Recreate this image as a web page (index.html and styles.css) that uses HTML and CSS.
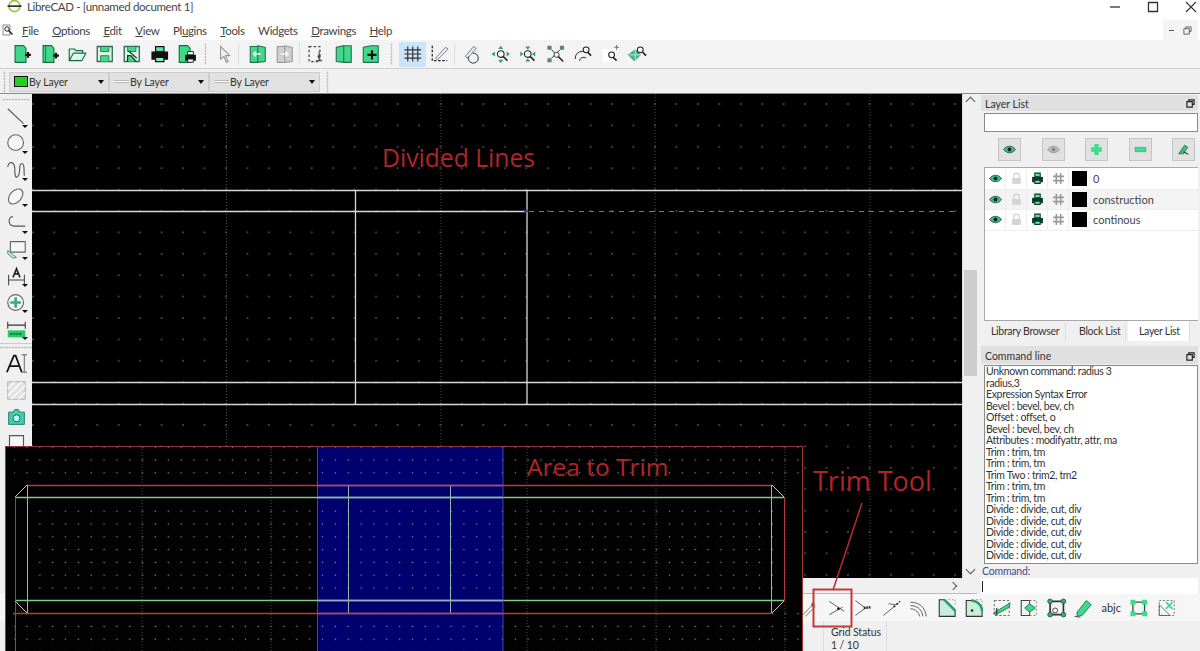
FILE: index.html
```html
<!DOCTYPE html>
<html lang="en">
<head>
<meta charset="utf-8">
<title>LibreCAD</title>
<link rel="stylesheet" href="styles.css">
</head>
<body>
<svg class="defs" width="0" height="0" aria-hidden="true">
  <defs>
    <symbol id="i-doc" viewBox="0 0 24 24"><path d="M4 2h10l3 3v17H4z" fill="#3fd98a" stroke="#1d6a48" stroke-width="1.4"/><path d="M16 13h7M19.500 9.500v7" stroke="#111" stroke-width="2.600"/></symbol>
    <symbol id="i-doc2" viewBox="0 0 24 24"><path d="M4 2h10l3 3v17H4z" fill="#3fd98a" stroke="#1d6a48" stroke-width="1.4"/><path d="M7 2v20" stroke="#1d6a48"/><path d="M16 14h7M19.500 10.500v7" stroke="#111" stroke-width="2.600"/></symbol>
    <symbol id="i-open" viewBox="0 0 24 24"><path d="M3 20V6h6l2 2h8v3H8L3 20h15l5-9h-5" fill="#d8f7e6" stroke="#1d6a48" stroke-width="1.400" stroke-linejoin="round"/></symbol>
    <symbol id="i-save" viewBox="0 0 24 24"><path d="M3 3h18v18H3z" fill="#dff6ea" stroke="#2c6a50" stroke-width="1.600"/><path d="M7 3h10v6H7zM7 21v-7h10v7" fill="#3fd98a" stroke="#2c6a50"/></symbol>
    <symbol id="i-saveas" viewBox="0 0 24 24"><path d="M3 3h18v18H3z" fill="#dff6ea" stroke="#2c6a50" stroke-width="1.600"/><path d="M7 3h10v6H7z" fill="#3fd98a" stroke="#2c6a50"/><path d="M7 21v-7h4l6 7M8 8l10 9" fill="#3fd98a" stroke="#1a3a2c" stroke-width="1.500"/></symbol>
    <symbol id="i-print" viewBox="0 0 24 24"><path d="M7 3h10v6H7z" fill="#5fe3a0" stroke="#111" stroke-width="1.500"/><path d="M2 9h20v10H2z" fill="#111"/><path d="M7 16h10v5H7z" fill="#8af0bb" stroke="#111" stroke-width="1.500"/></symbol>
    <symbol id="i-printl" viewBox="0 0 24 24"><path d="M7 2h10v7H7z" fill="#5fe3a0" stroke="#0d3a28" stroke-width="2"/><path d="M2 9h20v10H2z" fill="#0d3a28"/><path d="M7 15h10v6H7z" fill="#6fe8ab" stroke="#0d3a28" stroke-width="2"/></symbol>
    <symbol id="i-printdoc" viewBox="0 0 24 24"><path d="M3 2h10l3 3v17H3z" fill="#3fd98a" stroke="#1d6a48" stroke-width="1.400"/><path d="M10 13h13v7H10z" fill="#111"/><path d="M13 9h7v4h-7zM13 18h7v4h-7z" fill="#dff6ea" stroke="#111"/></symbol>
    <symbol id="i-cursor" viewBox="0 0 24 24"><path d="M7 3l11 11h-5l3 7-2 1-3-7-4 3z" fill="#f3f3f3" stroke="#9a9a9a" stroke-width="1.400"/></symbol>
    <symbol id="i-pgl" viewBox="0 0 24 24"><path d="M3 3h9v19H3zM12 2l9 2v17l-9 1z" fill="#3fd98a" stroke="#2c6a50" stroke-width="1.300"/><path d="M16 12H7M10 9l-3 3 3 3" fill="none" stroke="#f4f4f4" stroke-width="2"/></symbol>
    <symbol id="i-pgr" viewBox="0 0 24 24"><path d="M3 3h9v19H3zM12 2l9 2v17l-9 1z" fill="#cfcfcf" stroke="#999" stroke-width="1.300"/><path d="M7 12h9M13 9l3 3-3 3" fill="none" stroke="#f4f4f4" stroke-width="2"/></symbol>
    <symbol id="i-sel" viewBox="0 0 24 24"><path d="M4 3h13v18H4z" fill="none" stroke="#444" stroke-width="1.500" stroke-dasharray="3 2.500"/><circle cx="16" cy="15" r="1.800" fill="#444"/><path d="M16 9v11M12 20h8" stroke="#444" stroke-width="1.300"/></symbol>
    <symbol id="i-pg2" viewBox="0 0 24 24"><path d="M3 4l9-2v20l-9-1zM12 2h9v20h-9z" fill="#3fd98a" stroke="#2c6a50" stroke-width="1.300"/></symbol>
    <symbol id="i-pgp" viewBox="0 0 24 24"><path d="M3 4l9-2h9v20H3z" fill="#3fd98a" stroke="#2c6a50" stroke-width="1.300"/><path d="M8 13h11M13.500 7.500v11" stroke="#111" stroke-width="2.600"/></symbol>
    <symbol id="i-grid" viewBox="0 0 24 24"><path d="M6 3v18M12 3v18M18 3v18M2 7h20M2 12h20M2 17h20" stroke="#333" stroke-width="1.400"/></symbol>
    <symbol id="i-ortho" viewBox="0 0 24 24"><path d="M3 2v18h18" fill="none" stroke="#222" stroke-width="1.500" stroke-dasharray="3 2"/><path d="M7 17L19 4l3 2L9 19z" fill="#eef" stroke="#667" stroke-width="1"/></symbol>
    <symbol id="i-redraw" viewBox="0 0 24 24"><path d="M3 15L13 3l3 2L6 17z" fill="#e8f0ec" stroke="#667" stroke-width="1"/><path d="M12 11a6 6 0 1 1-5 4" fill="none" stroke="#333" stroke-width="1.200"/></symbol>
    <symbol id="i-zin" viewBox="0 0 24 24"><path d="M12 2l3 4H9zM12 23l3-4H9zM1 12l4-3v6zM23 12l-4-3v6z" fill="#3e9a73"/><circle cx="12" cy="12" r="4" fill="#fff" stroke="#222" stroke-width="1.300"/><path d="M15 15l5 5" stroke="#222" stroke-width="2"/></symbol>
    <symbol id="i-zout" viewBox="0 0 24 24"><path d="M12 7l3-4H9zM12 17l3 4H9zM7 12L3 9v6zM17 12l4-3v6z" fill="#3e9a73"/><circle cx="12" cy="12" r="4" fill="#fff" stroke="#222" stroke-width="1.300"/><path d="M15 15l5 5" stroke="#222" stroke-width="2"/></symbol>
    <symbol id="i-zauto" viewBox="0 0 24 24"><path d="M2 2h5v5H2zM17 2h5v5h-5zM2 17h5v5H2z" fill="#4d8a70"/><path d="M7 7l10 10M17 7L7 17" stroke="#333" stroke-width="1.200"/><circle cx="13" cy="13" r="3" fill="#fff" stroke="#222"/><path d="M15 15l6 6" stroke="#222" stroke-width="2"/></symbol>
    <symbol id="i-zprev" viewBox="0 0 24 24"><path d="M3 18a8 8 0 0 1 9-9M8 20a5 5 0 0 1 8-3" fill="none" stroke="#333" stroke-width="1.200"/><circle cx="16" cy="7" r="3.500" fill="#fff" stroke="#222" stroke-width="1.300"/><path d="M18 10l4 4" stroke="#222" stroke-width="2"/></symbol>
    <symbol id="i-zwin" viewBox="0 0 24 24"><path d="M2 6h16v16H2z" fill="#fff"/><circle cx="13" cy="13" r="3.500" fill="#fff" stroke="#222" stroke-width="1.300"/><path d="M15 16l4 4" stroke="#222" stroke-width="2"/><path d="M19 1v6M16 4h6" stroke="#666"/></symbol>
    <symbol id="i-zpan" viewBox="0 0 24 24"><path d="M9 6l4 4 3 3-4 4-4 4-4-4-4-4 4-3z" fill="#3eb88a"/><path d="M2 13h14M9 6v15" stroke="#e8e8e8"/><circle cx="15" cy="7" r="3.500" fill="#fff" stroke="#222" stroke-width="1.300"/><path d="M18 10l4 4" stroke="#222" stroke-width="2"/></symbol>
    <symbol id="i-eye" viewBox="0 0 24 24"><path d="M1 12c6-8 16-8 22 0-6 8-16 8-22 0z" fill="#3fbf85" stroke="#1d5a40" stroke-width="1.600"/><circle cx="12" cy="12" r="3.500" fill="#123"/></symbol>
    <symbol id="i-eyeg" viewBox="0 0 24 24"><path d="M1 12c6-8 16-8 22 0-6 8-16 8-22 0z" fill="#bbb" stroke="#999" stroke-width="1.600"/><circle cx="12" cy="12" r="3.500" fill="#888"/></symbol>
    <symbol id="i-plus" viewBox="0 0 24 24"><path d="M8 2h8v6h6v8h-6v6H8v-6H2V8h6z" fill="#3fdc8e"/></symbol>
    <symbol id="i-minus" viewBox="0 0 24 24"><path d="M2 8h20v8H2z" fill="#3fdc8e" stroke="#2b9d68"/></symbol>
    <symbol id="i-edit" viewBox="0 0 24 24"><path d="M3 20L14 4l6 4-8 12z" fill="#3fbf85" stroke="#2c6a50" stroke-width="1.500"/><path d="M12 16l9 5" stroke="#333" stroke-width="2"/></symbol>
    <symbol id="i-lock" viewBox="0 0 24 24"><path d="M7 11V7a5 5 0 0 1 10 0v4" fill="none" stroke="#ccc" stroke-width="2"/><path d="M4 11h16v11H4z" fill="#d4d4d4"/></symbol>
    <symbol id="i-hash" viewBox="0 0 24 24"><path d="M8 2v20M16 2v20M2 8h20M2 16h20" stroke="#999" stroke-width="3"/></symbol>
    <symbol id="i-line" viewBox="0 0 24 24"><path d="M2 2l18 17" stroke="#555" stroke-width="1.200"/></symbol>
    <symbol id="i-pin" viewBox="0 0 24 24"><path d="M3 22L17 8M8 22L20 10" stroke="#777" stroke-width="1.200"/><circle cx="17" cy="8" r="2.200" fill="#665"/></symbol>
    <symbol id="i-circle" viewBox="0 0 24 24"><circle cx="11" cy="11" r="9" fill="#f6f6f6" stroke="#666" stroke-width="1.300"/></symbol>
    <symbol id="i-spline" viewBox="0 0 24 24"><path d="M2 8c1-8 8-6 8 2s1 12 4 8 0-14 4-14 2 8 3 14" fill="none" stroke="#555" stroke-width="1.300"/></symbol>
    <symbol id="i-ellipse" viewBox="0 0 24 24"><ellipse cx="11" cy="12" rx="6.500" ry="10" transform="rotate(42 11 12)" fill="#f6f6f6" stroke="#666" stroke-width="1.300"/></symbol>
    <symbol id="i-poly" viewBox="0 0 24 24"><path d="M8 4C2 5 2 14 9 15h13" fill="none" stroke="#555" stroke-width="1.300"/></symbol>
    <symbol id="i-block" viewBox="0 0 24 24"><path d="M5 3h17v12H5z" fill="#f6f6f6" stroke="#666" stroke-width="1.300"/><path d="M2 13l10 8-4 1-6-5z" fill="#bfe8d6" stroke="#4d8a70"/></symbol>
    <symbol id="i-dim" viewBox="0 0 24 24"><path d="M3 10v12M21 10v12M3 16h18" stroke="#444" stroke-width="1.200"/><path d="M8 13l4-10 4 10M10 9h4" fill="none" stroke="#222" stroke-width="1.800"/></symbol>
    <symbol id="i-mod" viewBox="0 0 24 24"><circle cx="11" cy="12" r="9" fill="#f6f6f6" stroke="#666" stroke-width="1.300"/><path d="M11 6v12M5 12h12" stroke="#3ea87c" stroke-width="3"/></symbol>
    <symbol id="i-meas" viewBox="0 0 24 24"><path d="M2 3v8M22 3v8M2 7h20" stroke="#333" stroke-width="1.200"/><path d="M2 13h20v8H2z" fill="#22cc66"/><path d="M5 17h14" stroke="#0a5a2c" stroke-dasharray="2 1.500" stroke-width="2"/></symbol>
    <symbol id="i-text" viewBox="0 0 24 24"><path d="M1 22L9 3h2l7 19M4 15h11" fill="none" stroke="#111" stroke-width="2"/><path d="M21 2v20M18 2h6M18 22h6" stroke="#888" stroke-width="1.500"/></symbol>
    <symbol id="i-hatch" viewBox="0 0 24 24"><path d="M2 2h20v20H2z" fill="#e2e2e2" stroke="#aaa"/><path d="M2 10l8-8M2 18L18 2M6 22L22 6M14 22l8-8" stroke="#fafafa" stroke-width="2"/></symbol>
    <symbol id="i-cam" viewBox="0 0 24 24"><path d="M3 7h5l2-3h4l2 3h5v14H3z" fill="#3fd0a0" stroke="#2c6a70"/><circle cx="12" cy="14" r="4" fill="#bff" stroke="#155"/></symbol>
    <symbol id="i-img" viewBox="0 0 24 24"><path d="M4 3h16v14H4z" fill="#f6f6f6" stroke="#555" stroke-width="1.300"/></symbol>
    <symbol id="i-trim" viewBox="0 0 24 24"><path d="M3 4l18 12M3 20l16-9" stroke="#555" stroke-width="1.100"/><circle cx="14" cy="13" r="1.700" fill="#222"/></symbol>
    <symbol id="i-trim2" viewBox="0 0 24 24"><path d="M2 3l12 9M2 21l12-9" stroke="#555" stroke-width="1.100"/><path d="M12 12l9-1" stroke="#222" stroke-width="3" stroke-dasharray="2 1"/></symbol>
    <symbol id="i-lengthen" viewBox="0 0 24 24"><path d="M2 21l12-10" stroke="#555" stroke-width="1.100"/><path d="M14 11l8-7" stroke="#333" stroke-width="2" stroke-dasharray="3 1.500"/><path d="M8 7l9 1" stroke="#555"/></symbol>
    <symbol id="i-offset" viewBox="0 0 24 24"><path d="M2 5c10 0 18 6 19 17M2 9c8 0 14 5 15 13M2 13c6 0 10 4 11 9" fill="none" stroke="#666" stroke-width="1.200"/></symbol>
    <symbol id="i-bevel" viewBox="0 0 24 24"><path d="M3 2h6l13 13v7H3z" fill="#3fd98a" fill-opacity=".25" stroke="#333" stroke-width="1.300"/><path d="M9 2l13 13" stroke="#2c9d6a" stroke-width="3"/><path d="M14 2h8v8" fill="none" stroke="#888" stroke-dasharray="2 2"/></symbol>
    <symbol id="i-round" viewBox="0 0 24 24"><path d="M3 3h6c7 0 13 6 13 13v6H3z" fill="#3fd98a" fill-opacity=".25" stroke="#333" stroke-width="1.300"/><path d="M9 3c7 0 13 6 13 13" fill="none" stroke="#2c9d6a" stroke-width="3"/><circle cx="10" cy="15" r="1.500" fill="#222"/><path d="M15 2h7v7" fill="none" stroke="#888" stroke-dasharray="2 2"/></symbol>
    <symbol id="i-scale" viewBox="0 0 24 24"><path d="M3 3h18v18H3z" fill="none" stroke="#555" stroke-dasharray="3 2"/><path d="M2 18L22 6l-1 5L5 20z" fill="#3fd98a" stroke="#1d6a48"/><path d="M6 12v8" stroke="#333" stroke-width="1.500"/></symbol>
    <symbol id="i-mirror" viewBox="0 0 24 24"><path d="M3 3h10v18H3z" fill="#f6f6f6" stroke="#444" stroke-width="1.300"/><path d="M13 3h8v18h-8z" fill="none" stroke="#777" stroke-dasharray="2.500 2"/><path d="M7 12l6-5 7 5-7 5z" fill="#3fd98a" stroke="#1d6a48"/></symbol>
    <symbol id="i-stretch" viewBox="0 0 24 24"><path d="M4 4h16v16H4z" fill="#f4f4f4" stroke="#333" stroke-width="2"/><g fill="#3fa87c" stroke="#1d5a40"><circle cx="4" cy="4" r="2.800"/><circle cx="20" cy="4" r="2.800"/><circle cx="4" cy="20" r="2.800"/><circle cx="20" cy="20" r="2.800"/></g><circle cx="10" cy="15" r="3" fill="none" stroke="#333"/></symbol>
    <symbol id="i-attr" viewBox="0 0 24 24"><path d="M4 17L15 3l6 5-11 13-6 1z" fill="#3fd98a" stroke="#1d6a48"/><path d="M1 22l7 1" stroke="#333"/></symbol>
    <symbol id="i-square" viewBox="0 0 24 24"><path d="M5 5h14v14H5z" fill="#f6f6f6" stroke="#2c5a48" stroke-width="1.600"/><g fill="#3fd98a"><path d="M2 2h6v6H2zM16 2h6v6h-6zM2 16h6v6H2zM16 16h6v6h-6z"/></g></symbol>
    <symbol id="i-explode" viewBox="0 0 24 24"><path d="M3 3h18v18H3z" fill="none" stroke="#666" stroke-dasharray="2.500 2"/><path d="M3 8l13 13H3z" fill="none" stroke="#555"/><path d="M11 5l8 8M19 5l-8 8" stroke="#3fd98a" stroke-width="2"/></symbol>
    <pattern id="dots-main" x="-9.800" y="-0.700" width="21.450" height="21.400" patternUnits="userSpaceOnUse"><circle cx="10.700" cy="10.700" r=".8" fill="#8c8c8c"/></pattern>
    <pattern id="dots-trim" x="15.600" y="7.600" width="12.850" height="12.800" patternUnits="userSpaceOnUse"><circle cx="6.400" cy="6.400" r=".75" fill="#8c8c8c"/></pattern>
  </defs>
</svg>

<div class="app">
  <header class="titlebar">
    <div class="title-left">
      <svg class="app-logo" viewBox="0 0 16 16"><circle cx="8" cy="7" r="6.300" fill="none" stroke="#9ac23c" stroke-width="1.800"/><path d="M0 7h16" stroke="#222" stroke-width="1.800"/></svg>
      <span>LibreCAD - [unnamed document 1]</span>
    </div>
    <div class="winbtns">
      <svg class="winbtn" viewBox="0 0 12 12"><path d="M1 6h10" stroke="#333" stroke-width="1.300"/></svg>
      <svg class="winbtn" viewBox="0 0 12 12"><path d="M1.500 1.500h9v9h-9z" fill="none" stroke="#333" stroke-width="1.300"/></svg>
      <svg class="winbtn" viewBox="0 0 12 12"><path d="M1 1l10 10M11 1L1 11" stroke="#333" stroke-width="1.100"/></svg>
    </div>
  </header>

  <nav class="menubar">
    <svg class="menu-icon" viewBox="0 0 12 12"><path d="M1 1h7v10H1z" fill="#fff" stroke="#888"/><circle cx="5" cy="5" r="2.200" fill="none" stroke="#222"/><path d="M6.500 6.500l4 4" stroke="#222" stroke-width="1.500"/></svg>
    <div class="menu-items">
      <span><u>F</u>ile</span><span><u>O</u>ptions</span><span><u>E</u>dit</span><span><u>V</u>iew</span><span>Pl<u>u</u>gins</span><span><u>T</u>ools</span><span>Widgets</span><span><u>D</u>rawings</span><span><u>H</u>elp</span>
    </div>
    <div class="mdi-btns">
      <span class="mdi-min"></span>
      <svg class="mdi-restore" viewBox="0 0 10 10"><path d="M3 3V1h6v5H7M1 3h6v6H1z" fill="none" stroke="#555"/></svg>
    </div>
  </nav>

  <div class="toolbar">
    <svg class="ti"><use href="#i-doc"/></svg>
    <svg class="ti"><use href="#i-doc2"/></svg>
    <svg class="ti"><use href="#i-open"/></svg>
    <svg class="ti"><use href="#i-save"/></svg>
    <svg class="ti"><use href="#i-saveas"/></svg>
    <svg class="ti"><use href="#i-print"/></svg>
    <svg class="ti"><use href="#i-printdoc"/></svg>
    <span class="handle h10"></span>
    <svg class="ti"><use href="#i-cursor"/></svg>
    <span class="sep s5"></span>
    <svg class="ti"><use href="#i-pgl"/></svg>
    <svg class="ti"><use href="#i-pgr"/></svg>
    <span class="sep s3"></span>
    <svg class="ti"><use href="#i-sel"/></svg>
    <svg class="ti"><use href="#i-pg2"/></svg>
    <svg class="ti"><use href="#i-pgp"/></svg>
    <span class="handle h14"></span>
    <span class="ti-active"><svg class="ti"><use href="#i-grid"/></svg></span>
    <svg class="ti"><use href="#i-ortho"/></svg>
    <span class="sep s5"></span>
    <svg class="ti"><use href="#i-redraw"/></svg>
    <svg class="ti"><use href="#i-zin"/></svg>
    <svg class="ti"><use href="#i-zout"/></svg>
    <svg class="ti"><use href="#i-zauto"/></svg>
    <svg class="ti"><use href="#i-zprev"/></svg>
    <svg class="ti"><use href="#i-zwin"/></svg>
    <svg class="ti"><use href="#i-zpan"/></svg>
  </div>

  <div class="propbar">
    <span class="handle h8"></span>
    <div class="combo combo-color"><span class="swatch-green"></span><span class="combo-label">By Layer</span><span class="caret"></span></div>
    <div class="combo"><span class="line-sample"></span><span class="combo-label">By Layer</span><span class="caret"></span></div>
    <div class="combo combo-wide"><span class="line-sample"></span><span class="combo-label">By Layer</span><span class="caret"></span></div>
    <span class="handle h8"></span>
  </div>

  <main class="main">
    <aside class="lefttools">
      <span class="handle-h"></span>
      <span class="li more"><svg><use href="#i-line"/></svg></span>
      <span class="li more"><svg><use href="#i-circle"/></svg></span>
      <span class="li more"><svg><use href="#i-spline"/></svg></span>
      <span class="li more"><svg><use href="#i-ellipse"/></svg></span>
      <span class="li more"><svg><use href="#i-poly"/></svg></span>
      <span class="li more"><svg><use href="#i-block"/></svg></span>
      <span class="li more"><svg><use href="#i-dim"/></svg></span>
      <span class="li more"><svg><use href="#i-mod"/></svg></span>
      <span class="li more"><svg><use href="#i-meas"/></svg></span>
      <span class="left-sep"></span>
      <span class="li"><svg><use href="#i-text"/></svg></span>
      <span class="li"><svg><use href="#i-hatch"/></svg></span>
      <span class="li"><svg><use href="#i-cam"/></svg></span>
      <span class="li"><svg><use href="#i-img"/></svg></span>
    </aside>

    <section class="center">
      <div class="canvas-row">
        <div class="canvas">
          <svg class="drawing" viewBox="0 0 930 484">
            <rect width="930" height="484" fill="url(#dots-main)"/>
            <path d="M194.500 0v484M409 0v484M623 0v484M838 0v484" stroke="#4a4a4a" stroke-dasharray="1 2"/>
            <path d="M0 96.500h930M0 288.500h930M0 310.500h930M0 117.500h495M323.500 96v215M495 96v215" stroke="#d8d8d8" stroke-width="1.300" fill="none"/>
            <path d="M497 117.500h428" stroke="#777" stroke-dasharray="5 5"/>
            <circle cx="494" cy="117" r="1.800" fill="#223a8c"/>
          </svg>
          <span class="note note-divided">Divided Lines</span>
        </div>
        <div class="vscroll"><span class="arrow-up"></span><span class="thumb"></span><span class="arrow-down"></span></div>
      </div>
      <div class="hscroll"><span class="arrow-right"></span></div>
    </section>

    <aside class="dock">
      <div class="dock-head"><span>Layer List</span><svg class="float" viewBox="0 0 10 10"><path d="M3 3V1h6v5H7M1 3h6v6H1z" fill="none" stroke="#222" stroke-width="1.300"/></svg></div>
      <div class="filter"></div>
      <div class="layer-btns">
        <span class="lbtn"><svg><use href="#i-eye"/></svg></span>
        <span class="lbtn"><svg><use href="#i-eyeg"/></svg></span>
        <span class="lbtn"><svg><use href="#i-plus"/></svg></span>
        <span class="lbtn"><svg><use href="#i-minus"/></svg></span>
        <span class="lbtn"><svg><use href="#i-edit"/></svg></span>
      </div>
      <div class="layers">
        <div class="layer">
          <span class="cell"><svg><use href="#i-eye"/></svg></span><span class="cell"><svg><use href="#i-lock"/></svg></span><span class="cell"><svg><use href="#i-printl"/></svg></span><span class="cell"><svg><use href="#i-hash"/></svg></span><span class="cell"><i class="black"></i></span><span class="lname">0</span>
        </div>
        <div class="layer layer-alt">
          <span class="cell"><svg><use href="#i-eye"/></svg></span><span class="cell"><svg><use href="#i-lock"/></svg></span><span class="cell"><svg><use href="#i-printl"/></svg></span><span class="cell"><svg><use href="#i-hash"/></svg></span><span class="cell"><i class="black"></i></span><span class="lname">construction</span>
        </div>
        <div class="layer">
          <span class="cell"><svg><use href="#i-eye"/></svg></span><span class="cell"><svg><use href="#i-lock"/></svg></span><span class="cell"><svg><use href="#i-printl"/></svg></span><span class="cell"><svg><use href="#i-hash"/></svg></span><span class="cell"><i class="black"></i></span><span class="lname">continous</span>
        </div>
      </div>
      <div class="tabs">
        <span class="tab">Library Browser</span><span class="tab">Block List</span><span class="tab tab-on">Layer List</span>
      </div>
      <div class="dock-head dock-head-2"><span>Command line</span><svg class="float" viewBox="0 0 10 10"><path d="M3 3V1h6v5H7M1 3h6v6H1z" fill="none" stroke="#222" stroke-width="1.300"/></svg></div>
      <div class="history">
        <div>Unknown command: radius 3</div><div>radius,3</div><div>Expression Syntax Error</div><div>Bevel : bevel, bev, ch</div><div>Offset : offset, o</div><div>Bevel : bevel, bev, ch</div><div>Attributes : modifyattr, attr, ma</div><div>Trim : trim, tm</div><div>Trim : trim, tm</div><div>Trim Two : trim2, tm2</div><div>Trim : trim, tm</div><div>Trim : trim, tm</div><div>Divide : divide, cut, div</div><div>Divide : divide, cut, div</div><div>Divide : divide, cut, div</div><div>Divide : divide, cut, div</div><div>Divide : divide, cut, div</div>
      </div>
      <div class="cmd-label">Command:</div>
      <div class="cmd-input"><span class="cursor"></span></div>
    </aside>
  </main>

  <div class="modify-bar">
    <svg class="ti"><use href="#i-pin"/></svg>
    <svg class="ti"><use href="#i-trim"/></svg>
    <svg class="ti"><use href="#i-trim2"/></svg>
    <svg class="ti"><use href="#i-lengthen"/></svg>
    <svg class="ti"><use href="#i-offset"/></svg>
    <svg class="ti"><use href="#i-bevel"/></svg>
    <svg class="ti"><use href="#i-round"/></svg>
    <svg class="ti"><use href="#i-scale"/></svg>
    <svg class="ti"><use href="#i-mirror"/></svg>
    <svg class="ti"><use href="#i-stretch"/></svg>
    <svg class="ti"><use href="#i-attr"/></svg>
    <span class="ti arabic">abjc</span>
    <svg class="ti"><use href="#i-square"/></svg>
    <svg class="ti"><use href="#i-explode"/></svg>
  </div>
  <footer class="statusbar">
    <div class="grid-status"><div>Grid Status</div><div>1 / 10</div></div>
  </footer>

  <div class="trim-overlay">
    <svg class="drawing" viewBox="0 0 798 205">
      <rect width="798" height="205" fill="#020202"/>
      <rect x="312" width="186" height="205" fill="#00006e"/>
      <rect x="9" y="1" width="788" height="38" fill="url(#dots-trim)"/>
      <rect x="22" y="59" width="746" height="86" fill="url(#dots-trim)"/>
      <rect x="9" y="167" width="788" height="38" fill="url(#dots-trim)"/>
      <path d="M137 0v205M266 0v205M522 0v205M651 0v205M780 0v205" stroke="#4a4a4a" stroke-dasharray="1 2"/>
      <path d="M0.500 205V0.500H797.500V205" fill="none" stroke="#9c3a3a"/>
      <path d="M0 0.500H798" stroke="#8f3540"/>
      <path d="M22 39.500H766M8 167.500H766" stroke="#b03c3c" stroke-width="1.500"/>
      <path d="M10 51.500H779M10 154.500H779" stroke="#86c886" stroke-width="1.500"/>
      <path d="M10.500 51V205" stroke="#b03c3c"/>
      <path d="M779.500 51V155" stroke="#b03c3c"/>
      <path d="M22.500 39V167M766.500 39V167" stroke="#86c886"/>
      <path d="M10 51L22 39M10 155L22 167M767 39L779 51M767 167L779 155" stroke="#c8c8c8"/>
      <path d="M343.500 39V167M445.500 39V167" stroke="#8fb8b0"/>
      <path d="M312.500 0V205M498 0V205" stroke="#3a4ab0"/>
      <path d="M312 51.500H498M312 154.500H498" stroke="#8fb0c0" stroke-width="1.500"/>
      <path d="M312 39.500H498M312 167.500H498" stroke="#9050a0" stroke-width="1.500"/>
    </svg>
    <span class="note note-area">Area to Trim</span>
  </div>
  <span class="note note-trim">Trim Tool</span>
  <svg class="callout" viewBox="0 0 1200 651">
    <path d="M813.500 589.500h38v37h-38z" fill="none" stroke="#c23a3a" stroke-width="2"/>
    <path d="M862 503L833 590" stroke="#b32d35" stroke-width="1.500"/>
  </svg>
</div>
</body>
</html>
```

FILE: styles.css
```css
* { box-sizing: border-box; }
html, body { margin: 0; padding: 0; height: 100%; overflow: hidden; background: #fff; }
body { font-family: Lato, "Noto Sans", sans-serif; font-size: 11px; color: #333; }
.defs { position: absolute; }
.app { position: relative; width: 1200px; height: 651px; display: flex; flex-direction: column; overflow: hidden; }
.app > * { flex-shrink: 0; }

.titlebar { height: 20px; display: flex; justify-content: space-between; background: #fff; padding: 0 3px 0 7px; }
.title-left { display: flex; align-items: flex-start; gap: 5px; font-size: 11.500px; letter-spacing: -.33px; line-height: 14px; color: #444; }
.app-logo { width: 15px; height: 14px; }
.winbtns { display: flex; gap: 26px; }
.winbtn { width: 12px; height: 12px; margin-top: 1px; }

.menubar { height: 20px; display: flex; align-items: center; background: #fff; padding: 0 2px 0 2px; }
.menu-icon { width: 12px; height: 12px; flex: none; }
.menu-items { display: flex; gap: 13.500px; margin-left: 8px; font-size: 11.500px; letter-spacing: -.35px; flex: 1; color: #444; }
.mdi-btns { display: flex; align-items: center; gap: 9px; background: #f4f4f4; height: 20px; padding: 0 6px; }
.mdi-min { width: 5px; height: 1px; background: #555; }
.mdi-restore { width: 9px; height: 9px; }

.toolbar { height: 29px; display: flex; align-items: center; background: #f3f3f3; padding-left: 8px; border-bottom: 1px solid #cfcfcf; }
.ti { width: 27.500px; height: 20px; flex: none; }
.ti-active { display: flex; width: 27.500px; height: 25px; align-items: center; background: #cce4f7; flex: none; }
.handle { flex: none; display: block; height: 22px; background-image: radial-gradient(circle, #aaa .8px, transparent 1.100px); background-size: 3px 3px; background-repeat: repeat-y; background-position: center; }
.h10 { width: 10px; }
.h14 { width: 14px; }
.h8 { width: 8px; }
.sep { flex: none; display: block; height: 22px; }
.s5 { width: 5.500px; border-left: 1px solid #dedede; }
.s3 { width: 3.500px; border-left: 1px solid #dedede; }

.propbar { height: 25px; display: flex; align-items: center; padding-top: 1px; background: #f0f0f0; border-bottom: 1px solid #8a8a8a; }
.propbar .h8:first-child { width: 9px; }
.propbar .h8:last-child { margin-left: 3px; }
.combo { width: 100px; height: 20px; display: flex; align-items: center; background: #e1e1e1; border: 1px solid #cdcdcd; position: relative; padding-left: 4px; gap: 1px; }
.combo-wide { width: 111px; }
.combo-label { font-size: 10.500px; letter-spacing: -.1px; }
.swatch-green { width: 14px; height: 11px; background: #1fd21f; border: 1px solid #111; }
.line-sample { width: 15px; height: 3px; background: #fff; border-top: 1px solid #b8b8b8; border-bottom: 1px solid #b8b8b8; }
.caret { position: absolute; right: 4px; top: 7px; border: 3.500px solid transparent; border-top: 4.500px solid #111; border-bottom: 0; }

.main { height: 500px; display: flex; background: #f0f0f0; }
.lefttools { width: 32px; flex: none; display: flex; flex-direction: column; align-items: center; background: #f0f0f0; }
.handle-h { display: block; width: 28px; height: 10px; flex: none; background-image: radial-gradient(circle, #aaa .8px, transparent 1.100px); background-size: 3px 3px; background-repeat: repeat-x; background-position: center; }
.li { position: relative; display: flex; align-items: center; justify-content: center; width: 26px; height: 26.500px; flex: none; }
.li svg { width: 21px; height: 21px; }
.more::after { content: ""; position: absolute; right: 1px; bottom: 3px; border: 3px solid transparent; border-top: 3.500px solid #111; border-bottom: 0; }
.left-sep { display: block; flex: none; width: 32px; height: 8px; border-top: 1px solid #ccc; background-image: radial-gradient(circle, #aaa .8px, transparent 1.100px); background-size: 3px 3px; background-repeat: repeat-x; background-position: center; }

.center { width: 945px; flex: none; display: flex; flex-direction: column; }
.canvas-row { height: 484px; display: flex; flex: none; }
.canvas { position: relative; width: 930px; height: 484px; background: #000; }
.drawing { display: block; width: 100%; height: 100%; }
.note { position: absolute; color: #b0252a; white-space: nowrap; line-height: 1; font-family: "Open Sans", "Noto Sans", sans-serif; }
.note-divided { left: 350px; top: 52px; font-size: 24.700px; }
.vscroll { width: 15px; position: relative; background: #f0f0f0; border-left: 1px solid #ddd; }
.thumb { position: absolute; left: 1px; right: 0; top: 176px; height: 106px; background: #cdcdcd; }
.arrow-up, .arrow-down { position: absolute; left: 4px; width: 7px; height: 7px; border-left: 1.500px solid #555; border-top: 1.500px solid #555; }
.arrow-up { top: 4px; transform: rotate(45deg); }
.arrow-down { bottom: 5px; transform: rotate(225deg); }
.hscroll { flex: 1; position: relative; background: #f0f0f0; border-bottom: 1px solid #bbb; }
.arrow-right { position: absolute; right: 21px; top: 5px; width: 6px; height: 6px; border-right: 1.500px solid #555; border-top: 1.500px solid #555; transform: rotate(45deg); }

.dock { width: 217px; margin-left: 4px; flex: none; display: flex; flex-direction: column; }
.dock > * { flex-shrink: 0; }
.dock-head { height: 16px; margin-top: 1px; padding: 1px 3px 0 4px; display: flex; align-items: center; justify-content: space-between; background: #e0e0e0; font-size: 10.500px; }
.float { width: 9px; height: 9px; }
.filter { height: 19px; margin: 2px 0 0 3px; background: #fff; border: 1px solid #8a8a8a; }
.layer-btns { height: 35px; display: flex; align-items: center; gap: 20.500px; padding-left: 17px; }
.lbtn { width: 23px; height: 23px; display: flex; align-items: center; justify-content: center; background: #e1e1e1; border: 1px solid #c4c4c4; }
.lbtn svg { width: 13px; height: 13px; }
.layers { height: 154px; margin-left: 3px; padding-top: 1px; background: #fff; border: 1px solid #a8a8a8; border-right: 0; }
.layer { height: 20.500px; display: flex; align-items: center; border-bottom: 1px solid #eee; }
.layer-alt { background: #f3f3f3; }
.cell { width: 21px; height: 100%; display: flex; align-items: center; justify-content: center; border-right: 1px solid #eee; flex: none; }
.cell svg { width: 13px; height: 13px; }
.black { display: block; width: 15px; height: 15px; background: #000; }
.lname { padding-left: 3px; font-size: 11px; color: #444; }
.tabs { height: 20px; display: flex; align-items: flex-end; padding-left: 3px; font-size: 10.500px; letter-spacing: -.3px; white-space: nowrap; }
.tab { height: 18px; line-height: 17px; padding: 0 7px; margin-right: 2px; border-right: 1px solid #ddd; }
.tab:nth-child(1) { width: 82px; }
.tab:nth-child(2) { width: 58px; padding-left: 11px; }
.tab-on { height: 20px; width: 62px; background: #fff; padding-left: 11px; line-height: 21px; }
.dock-head-2 { height: 18px; margin-top: 5px; padding-top: 2px; }
.history { height: 199px; margin: 1px 0 0 3px; padding: 0 1px; background: #fff; border: 1px solid #8a8a8a; font-size: 10.500px; letter-spacing: -.35px; line-height: 11.500px; color: #333; overflow: hidden; }
.cmd-label { height: 13px; margin-top: 1px; line-height: 13px; font-size: 10.500px; letter-spacing: -.2px; color: #3c4c8c; padding-left: 1px; }
.cmd-input { flex: 1; background: #fff; padding: 3px 1px; }
.cursor { display: block; width: 1px; height: 11px; background: #222; }

.modify-bar { height: 27px; display: flex; align-items: center; padding-left: 795px; background: #f6f6f6; }
.arabic { font-size: 11px; line-height: 20px; text-align: center; color: #333; }
.statusbar { flex: 1; min-height: 0; background: #f0f0f0; padding-left: 823px; }
.grid-status { width: 64px; height: 100%; padding: 5px 0 0 7px; font-size: 10.500px; letter-spacing: -.1px; line-height: 13px; border-left: 1px solid #ddd; border-right: 1px solid #ddd; }

.trim-overlay { position: absolute; left: 5px; top: 446px; width: 798px; height: 205px; }
.note-area { left: 522px; top: 9px; font-size: 24.500px; }
.note-trim { left: 813px; top: 467px; font-size: 27px; }
.callout { position: absolute; left: 0; top: 0; width: 1200px; height: 651px; pointer-events: none; }
```
